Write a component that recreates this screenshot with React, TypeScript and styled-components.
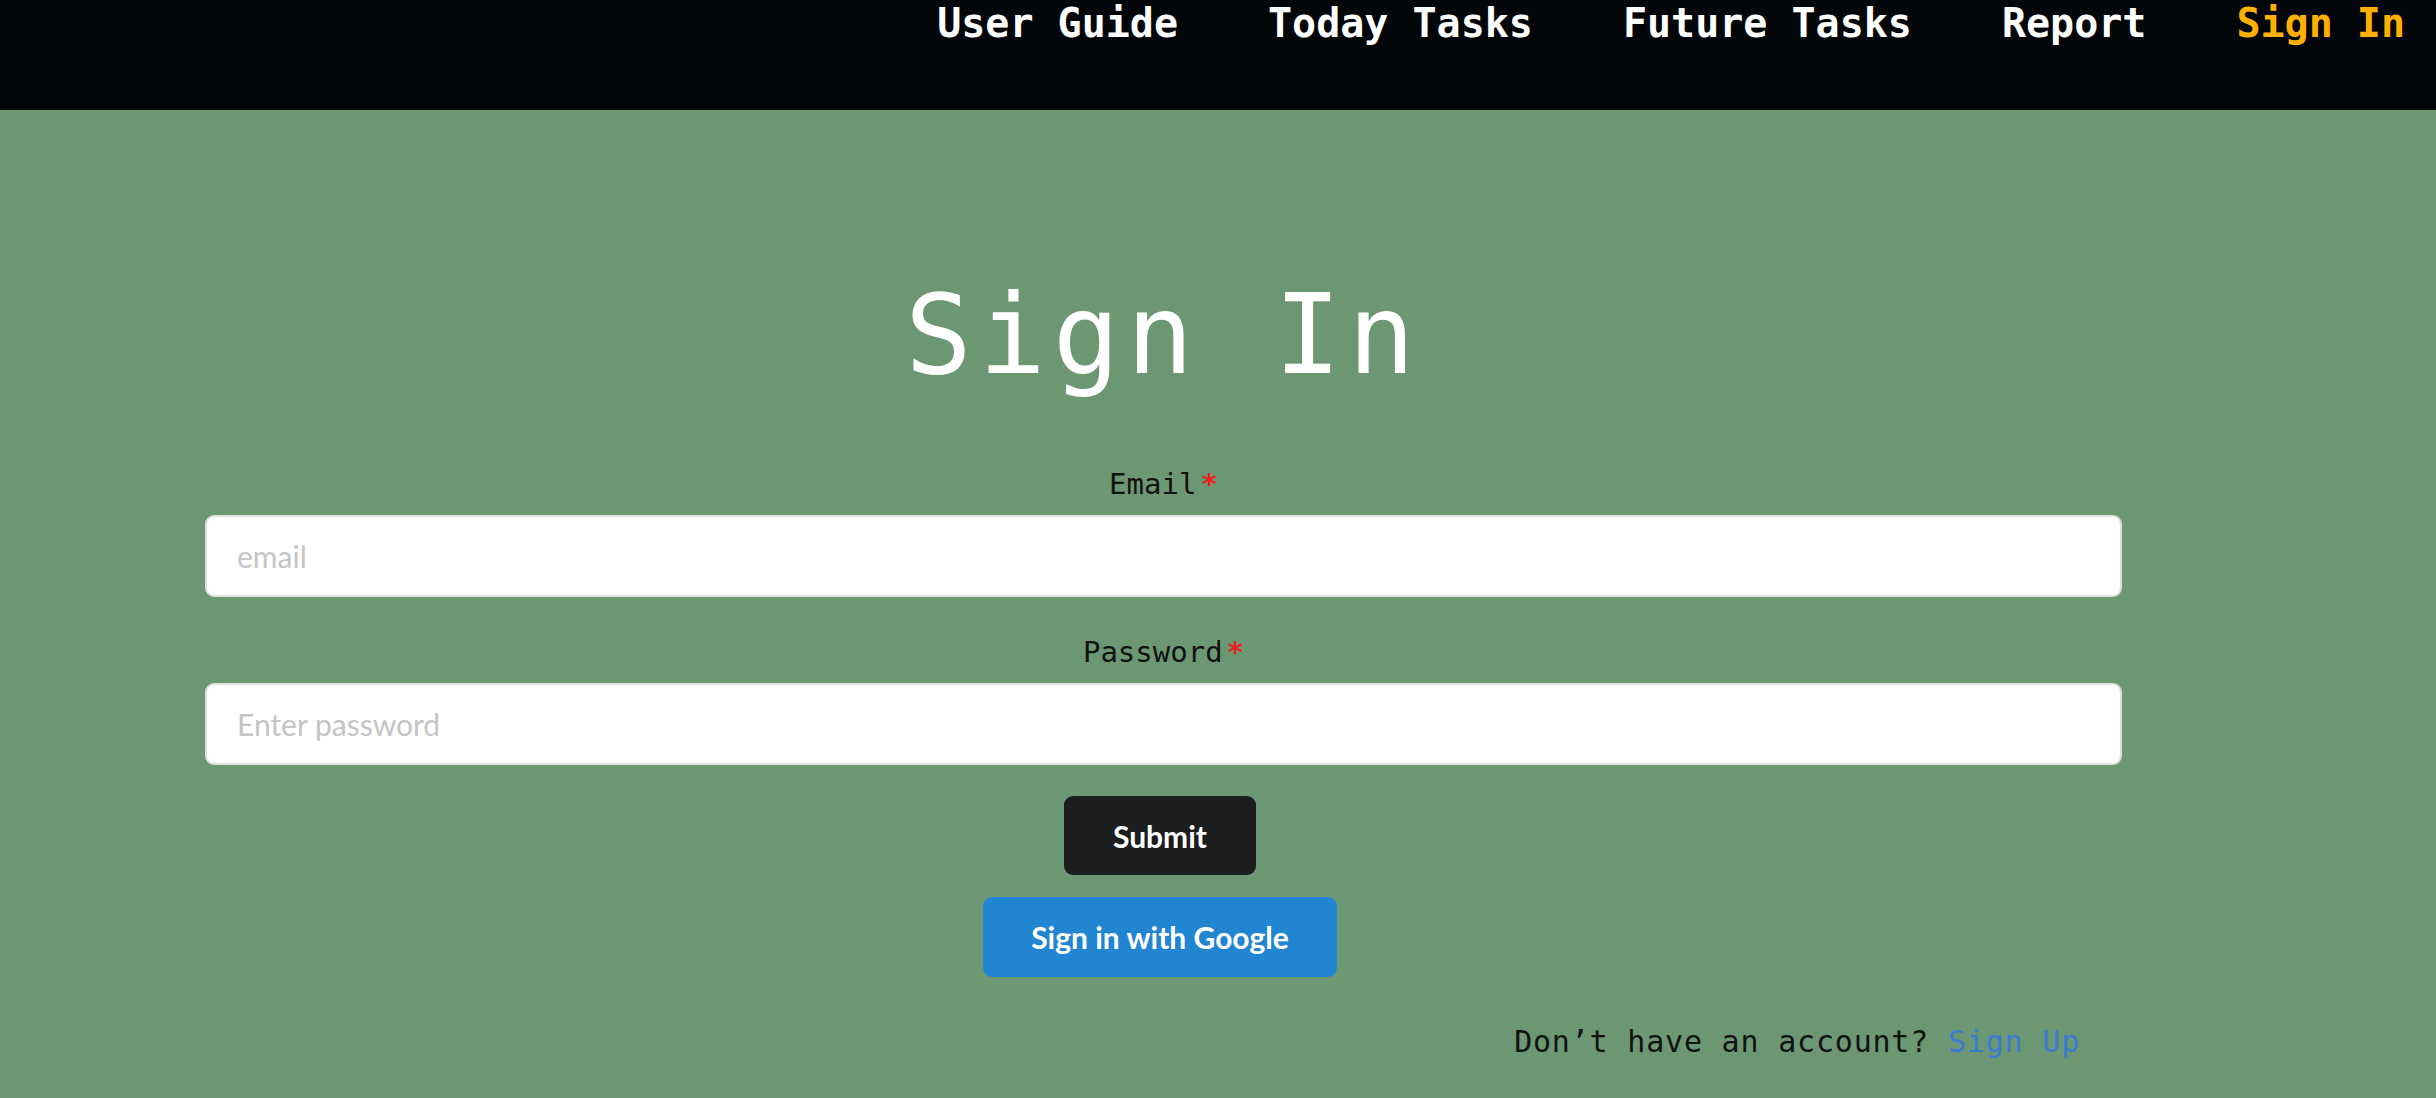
import React from "react";
import styled, { createGlobalStyle } from "styled-components";

const GlobalStyle = createGlobalStyle`
  html, body {
    margin: 0;
    padding: 0;
    background: #6c9773;
  }
  body {
    min-height: 100vh;
    font-family: "DejaVu Sans Mono", "Liberation Mono", monospace;
  }
  * { box-sizing: border-box; }
`;

const Page = styled.div`
  min-height: 100vh;
  background: #6c9773;
  display: flex;
  flex-direction: column;
`;

const Header = styled.header`
  height: 110px;
  background: #020608;
  display: flex;
  justify-content: flex-end;
  align-items: flex-start;
  gap: 90px;
  padding-right: 31px;
`;

const NavLink = styled.a<{ $active?: boolean }>`
  font-family: "DejaVu Sans Mono", "Liberation Mono", monospace;
  font-weight: 700;
  font-size: 40px;
  color: ${(p) => (p.$active ? "#ffb000" : "#ffffff")};
  text-decoration: none;
  cursor: pointer;
  white-space: nowrap;
`;

const Main = styled.main`
  display: flex;
  flex-direction: column;
  padding: 160px 314px 0 205px;
`;

const Title = styled.h1`
  margin: 0;
  font-family: "DejaVu Sans Mono", "Liberation Mono", monospace;
  font-weight: 400;
  font-size: 111px;
  line-height: 130px;
  letter-spacing: 7px;
  color: #ffffff;
  text-align: center;
`;

const Form = styled.form`
  display: flex;
  flex-direction: column;
  margin-top: 67px;
`;

const Field = styled.div<{ $gap?: number }>`
  display: flex;
  flex-direction: column;
  margin-top: ${(p) => p.$gap ?? 0}px;
`;

const Label = styled.label`
  font-family: "DejaVu Sans Mono", "Liberation Mono", monospace;
  font-size: 29px;
  line-height: 34px;
  color: #111111;
  text-align: center;
  margin-bottom: 14px;
`;

const Required = styled.span`
  color: #e8231f;
  margin-left: 4px;
  font-weight: 700;
`;

const Input = styled.input`
  width: 100%;
  height: 82px;
  border: 2px solid #dedede;
  border-radius: 9px;
  background: #ffffff;
  padding: 0 30px;
  font-family: Lato, "Open Sans", sans-serif;
  font-size: 30px;
  color: #222;
  outline: none;
  &::placeholder {
    color: #c6c4c4;
  }
`;

const Buttons = styled.div`
  display: flex;
  flex-direction: column;
  align-items: center;
  gap: 22px;
  margin-top: 31px;
  padding-right: 7px;
`;

const Button = styled.button<{ $variant: "dark" | "google" }>`
  height: ${(p) => (p.$variant === "dark" ? 79 : 80)}px;
  padding: 0 ${(p) => (p.$variant === "dark" ? 49 : 48)}px;
  border: none;
  border-radius: 9px;
  background: ${(p) => (p.$variant === "dark" ? "#1c1d1f" : "#2285d2")};
  color: #ffffff;
  font-family: Lato, "Open Sans", sans-serif;
  font-weight: 700;
  font-size: 30px;
  cursor: pointer;
`;

const Footer = styled.p`
  margin: 47px 0 0;
  font-family: "DejaVu Sans Mono", "Liberation Mono", monospace;
  font-size: 30px;
  line-height: 35px;
  letter-spacing: 0.8px;
  color: #111111;
  text-align: right;
  padding-right: 42px;
`;

const SignUpLink = styled.a`
  color: #3a7bd5;
  text-decoration: none;
  cursor: pointer;
`;

export default function App() {
  return (
    <>
      <GlobalStyle />
      <Page>
        <Header>
          <NavLink>User Guide</NavLink>
          <NavLink>Today Tasks</NavLink>
          <NavLink>Future Tasks</NavLink>
          <NavLink>Report</NavLink>
          <NavLink $active>Sign In</NavLink>
        </Header>
        <Main>
          <Title>Sign In</Title>
          <Form onSubmit={(e) => e.preventDefault()}>
            <Field>
              <Label htmlFor="email">
                Email<Required>*</Required>
              </Label>
              <Input id="email" type="email" placeholder="email" />
            </Field>
            <Field $gap={38}>
              <Label htmlFor="password">
                Password<Required>*</Required>
              </Label>
              <Input id="password" type="password" placeholder="Enter password" />
            </Field>
            <Buttons>
              <Button type="submit" $variant="dark">Submit</Button>
              <Button type="button" $variant="google">Sign in with Google</Button>
            </Buttons>
          </Form>
          <Footer>
            Don’t have an account? <SignUpLink>Sign Up</SignUpLink>
          </Footer>
        </Main>
      </Page>
    </>
  );
}
